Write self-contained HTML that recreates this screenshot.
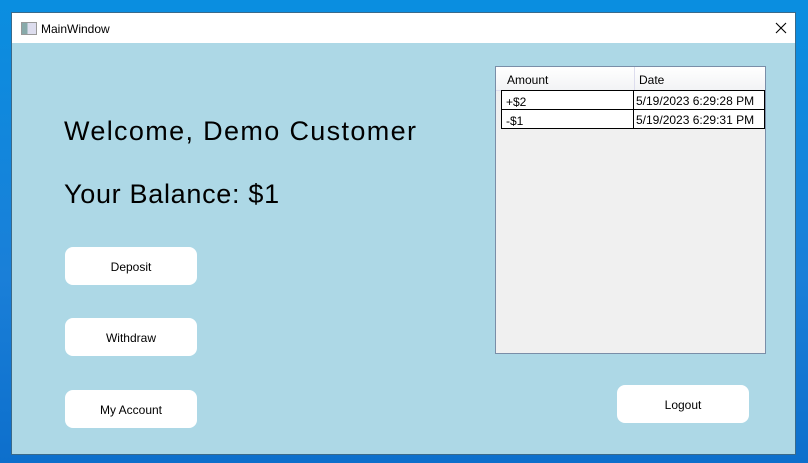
<!DOCTYPE html>
<html><head><style>
body{margin:0;width:808px;height:463px;overflow:hidden;background:linear-gradient(180deg,#0a8ee0 0%,#1a7fd8 60%,#0d6fcc 100%);font-family:"Liberation Sans",sans-serif;position:relative}
.win{position:absolute;left:11px;top:12px;width:785px;height:443px;background:#add8e6;border:1px solid #3a6a8a;box-sizing:border-box}
.in{position:absolute;left:-1px;top:-1px;width:785px;height:443px}
.title{position:absolute;left:1px;top:1px;right:1px;height:30px;background:#fff}
.title span{position:absolute;left:29px;top:9px;font-size:12px;color:#000}
.ico{position:absolute;left:9px;top:9px;width:14px;height:11px;background:linear-gradient(90deg,#8aa 0 40%,#dde 40%);border:1px solid #999}
.t{position:absolute;font-size:27px;color:#000;white-space:nowrap}
.btn{position:absolute;width:132px;height:38px;background:#fff;border-radius:8px;font-size:12px;text-align:center;line-height:40px;color:#000}
.grid{position:absolute;left:484px;top:54px;width:271px;height:288px;background:#f0f0f0;border:1px solid #7a8ea8;box-sizing:border-box}
.hdr{position:absolute;left:0;top:0;right:0;height:23px;background:linear-gradient(#fff,#f2f3f5);border-bottom:1px solid #dde}
.hdr div{position:absolute;font-size:12px;top:6px}
.row{position:absolute;left:5px;width:264px;height:20px;background:#fff;border:1px solid #000;box-sizing:border-box;font-size:12px}
.c1{position:absolute;left:4px;top:4px}
.c2{position:absolute;left:131px;top:0;bottom:0;border-left:1px solid #000;padding:3px 0 0 2px}
</style></head><body>
<div class="win"><div class="in">
<div class="title"><div class="ico"></div><span>MainWindow</span>
<svg style="position:absolute;right:8px;top:9px" width="12" height="12"><path d="M1 1L11 11M11 1L1 11" stroke="#000" stroke-width="1.1"/></svg></div>
<div class="t" style="left:53px;top:104px;letter-spacing:1.35px">Welcome, Demo Customer</div>
<div class="t" style="left:53px;top:167px;letter-spacing:0.7px">Your Balance: $1</div>
<div class="btn" style="left:54px;top:235px">Deposit</div>
<div class="btn" style="left:54px;top:306px">Withdraw</div>
<div class="btn" style="left:54px;top:378px">My Account</div>
<div class="btn" style="left:606px;top:373px">Logout</div>
<div class="grid">
<div class="hdr"><div style="left:11px">Amount</div><div style="left:138px;border-left:1px solid #dde;padding-left:4px;top:0;height:17px;padding-top:6px">Date</div></div>
<div class="row" style="top:23px"><div class="c1">+$2</div><div class="c2">5/19/2023 6:29:28 PM</div></div>
<div class="row" style="top:42px"><div class="c1">-$1</div><div class="c2">5/19/2023 6:29:31 PM</div></div>
</div>
</div></div>
</body></html>
